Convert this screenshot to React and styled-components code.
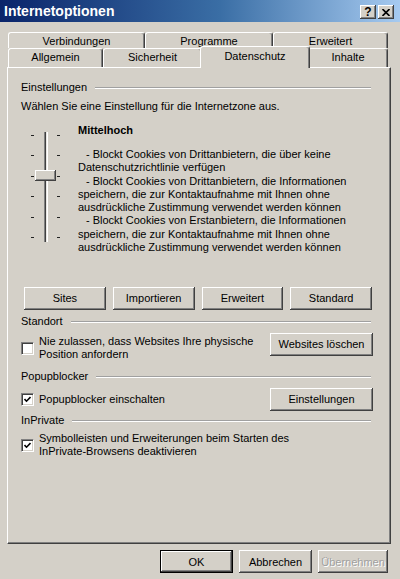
import React from "react"
import styled, { createGlobalStyle, css } from "styled-components"

const GlobalStyle = createGlobalStyle`
  html, body {
    margin: 0;
    padding: 0;
    background: #d4d0c8;
  }
  body {
    font-family: "Liberation Sans", Arial, sans-serif;
    font-size: 11px;
    color: #000;
  }
`

const raised = css`
  box-shadow: inset -1px -1px #404040, inset 1px 1px #ffffff,
    inset -2px -2px #808080, inset 2px 2px #d4d0c8;
`

const Window = styled.div`
  width: 400px;
  height: 579px;
  background: #d4d0c8;
  display: flex;
  flex-direction: column;
  overflow: hidden;
`

const TitleBar = styled.div`
  height: 22px;
  display: flex;
  align-items: center;
  justify-content: space-between;
  padding: 0 6px 0 4px;
  background: linear-gradient(to right, #0a246a 0%, #3a6ea5 55%, #a6caf0 100%);
`

const TitleText = styled.span`
  color: #fff;
  font-weight: bold;
  font-size: 14px;
`

const TitleButtons = styled.div`
  display: flex;
  gap: 2px;
  margin-top: 2px;
`

const TitleButton = styled.div`
  width: 16px;
  height: 14px;
  background: #d4d0c8;
  ${raised};
  display: flex;
  align-items: center;
  justify-content: center;
  font-weight: bold;
  font-size: 12px;
  line-height: 14px;
`

const TabArea = styled.div`
  padding: 10px 0 0 8px;
  position: relative;
  z-index: 1;
`

const TabRow = styled.div`
  display: flex;
  height: ${(p) => p.$height}px;
  align-items: flex-end;
  margin-bottom: ${(p) => (p.$front ? -1 : 0)}px;
`

const Tab = styled.div`
  box-sizing: border-box;
  width: ${(p) => p.$width}px;
  height: ${(p) => (p.$active ? 22 : p.$back ? 16 : 19)}px;
  margin: 0 ${(p) => (p.$active ? -2 : 0)}px ${(p) => (p.$active || p.$back ? 0 : 1)}px;
  padding-top: ${(p) => (p.$active ? 3 : 2)}px;
  background: #d4d0c8;
  border-top: 1px solid #fff;
  border-left: 1px solid #fff;
  border-right: 1px solid #404040;
  border-radius: 3px 3px 0 0;
  box-shadow: inset -1px 0 #808080;
  text-align: center;
  line-height: 13px;
  position: relative;
  z-index: ${(p) => (p.$active ? 2 : 1)};
`

const Panel = styled.div`
  box-sizing: border-box;
  width: 384px;
  height: 477px;
  margin-left: 7px;
  padding: 13px 17px 0 13px;
  border-top: 1px solid #fff;
  border-left: 1px solid #fff;
  border-right: 1px solid #404040;
  border-bottom: 1px solid #404040;
  box-shadow: inset -1px -1px #808080;
  display: flex;
  flex-direction: column;
  line-height: 13px;
`

const GroupHeader = styled.div`
  display: flex;
  align-items: center;
  gap: 8px;
  margin-top: ${(p) => p.$top || 0}px;
`

const Rule = styled.div`
  flex: 1;
  border-top: 1px solid #a0a0a0;
  border-bottom: 1px solid #fff;
  margin-right: 2px;
`

const Text = styled.div`
  margin-top: ${(p) => p.$top || 0}px;
`

const SettingsArea = styled.div`
  display: flex;
  margin-top: 11px;
`

const SliderBox = styled.div`
  position: relative;
  width: 29px;
  height: 110px;
  margin: 8px 0 0 10px;
  display: flex;
  justify-content: space-between;
`

const TickColumn = styled.div`
  width: 3px;
  display: flex;
  flex-direction: column;
  justify-content: space-between;
  padding: 3px 0 4px;
`

const Tick = styled.div`
  height: 1px;
  background: #222;
`

const Track = styled.div`
  box-sizing: border-box;
  width: 4px;
  border-left: 1px solid #808080;
  border-right: 1px solid #fff;
  box-shadow: inset 1px 0 #404040;
  background: #e8e6e2;
`

const Thumb = styled.div`
  position: absolute;
  left: 4px;
  top: 38px;
  width: 21px;
  height: 11px;
  background: #d4d0c8;
  ${raised};
`

const Description = styled.div`
  margin-left: 18px;
`

const Level = styled.div`
  font-weight: bold;
`

const DescLines = styled.div`
  margin-top: 11px;
  line-height: 13.3px;
`

const DescLine = styled.div`
  padding-left: ${(p) => (p.$dash ? 8 : 0)}px;
  white-space: nowrap;
`

const ButtonRow = styled.div`
  display: grid;
  grid-template-columns: repeat(4, 1fr);
  gap: 7px;
  margin: 33px 1px 0 3px;
`

const Button = styled.div`
  box-sizing: border-box;
  width: ${(p) => (p.$width ? `${p.$width}px` : "auto")};
  height: ${(p) => p.$height || 23}px;
  background: #d4d0c8;
  display: flex;
  align-items: center;
  justify-content: center;
  ${raised};
  ${(p) =>
    p.$default &&
    css`
      border: 1px solid #000;
    `}
  ${(p) =>
    p.$disabled &&
    css`
      color: #a0a0a0;
      text-shadow: 1px 1px #fff;
    `}
`

const OptionRow = styled.div`
  display: grid;
  grid-template-columns: ${(p) => (p.$single ? "1fr" : "1fr 103px")};
  align-items: ${(p) => p.$align || "center"};
  margin-top: ${(p) => p.$top || 0}px;
`

const CheckLabel = styled.label`
  display: flex;
  align-items: center;
  gap: 5px;
  padding-top: ${(p) => p.$pad || 0}px;
  white-space: nowrap;
`

const Box = styled.span`
  box-sizing: border-box;
  flex: none;
  width: 13px;
  height: 13px;
  background: #fff;
  border: 1px solid;
  border-color: #808080 #fff #fff #808080;
  box-shadow: inset 1px 1px #404040, inset -1px -1px #d4d0c8;
  display: flex;
  align-items: center;
  justify-content: center;
`

const Footer = styled.div`
  display: flex;
  justify-content: flex-end;
  gap: 6px;
  padding: 6px 12px 0 0;
`

function Checkbox({ checked }) {
  return (
    <Box>
      {checked && (
        <svg width="7" height="7" viewBox="0 0 7 7">
          <path d="M0.5 3 L2.5 5.2 L6.5 1" fill="none" stroke="#000" strokeWidth="1.6" />
        </svg>
      )}
    </Box>
  )
}

function Group({ label, top }) {
  return (
    <GroupHeader $top={top}>
      <span>{label}</span>
      <Rule />
    </GroupHeader>
  )
}

const ticks = [0, 1, 2, 3, 4, 5]

const lines = [
  { text: "- Blockt Cookies von Drittanbietern, die über keine", dash: true },
  { text: "Datenschutzrichtlinie verfügen" },
  { text: "- Blockt Cookies von Drittanbietern, die Informationen", dash: true },
  { text: "speichern, die zur Kontaktaufnahme mit Ihnen ohne" },
  { text: "ausdrückliche Zustimmung verwendet werden können" },
  { text: "- Blockt Cookies von Erstanbietern, die Informationen", dash: true },
  { text: "speichern, die zur Kontaktaufnahme mit Ihnen ohne" },
  { text: "ausdrückliche Zustimmung verwendet werden können" },
]

export default function App() {
  return (
    <Window>
      <GlobalStyle />
      <TitleBar>
        <TitleText>Internetoptionen</TitleText>
        <TitleButtons>
          <TitleButton>?</TitleButton>
          <TitleButton>
            <svg width="8" height="7" viewBox="0 0 8 7">
              <path d="M0.5 0 L7.5 7 M7.5 0 L0.5 7" stroke="#000" strokeWidth="1.6" />
            </svg>
          </TitleButton>
        </TitleButtons>
      </TitleBar>

      <TabArea>
        <TabRow $height={16}>
          <Tab $back $width={137}>Verbindungen</Tab>
          <Tab $back $width={128}>Programme</Tab>
          <Tab $back $width={115}>Erweitert</Tab>
        </TabRow>
        <TabRow $height={20} $front>
          <Tab $width={95}>Allgemein</Tab>
          <Tab $width={99}>Sicherheit</Tab>
          <Tab $width={110} $active>Datenschutz</Tab>
          <Tab $width={80}>Inhalte</Tab>
        </TabRow>
      </TabArea>

      <Panel>
        <Group label="Einstellungen" />
        <Text $top={6}>Wählen Sie eine Einstellung für die Internetzone aus.</Text>

        <SettingsArea>
          <SliderBox>
            <TickColumn>
              {ticks.map((t) => (
                <Tick key={t} />
              ))}
            </TickColumn>
            <Track />
            <TickColumn>
              {ticks.map((t) => (
                <Tick key={t} />
              ))}
            </TickColumn>
            <Thumb />
          </SliderBox>
          <Description>
            <Level>Mittelhoch</Level>
            <DescLines>
              {lines.map((l, i) => (
                <DescLine key={i} $dash={l.dash}>
                  {l.text}
                </DescLine>
              ))}
            </DescLines>
          </Description>
        </SettingsArea>

        <ButtonRow>
          <Button>Sites</Button>
          <Button>Importieren</Button>
          <Button>Erweitert</Button>
          <Button>Standard</Button>
        </ButtonRow>

        <Group label="Standort" top={5} />
        <OptionRow $top={5} $align="start">
          <CheckLabel $pad={2}>
            <Checkbox />
            <span>
              Nie zulassen, dass Websites Ihre physische
              <br />
              Position anfordern
            </span>
          </CheckLabel>
          <Button>Websites löschen</Button>
        </OptionRow>

        <Group label="Popupblocker" top={9} />
        <OptionRow $top={5}>
          <CheckLabel>
            <Checkbox checked />
            <span>Popupblocker einschalten</span>
          </CheckLabel>
          <Button>Einstellungen</Button>
        </OptionRow>

        <Group label="InPrivate" top={3} />
        <OptionRow $top={5} $single>
          <CheckLabel>
            <Checkbox checked />
            <span>
              Symbolleisten und Erweiterungen beim Starten des
              <br />
              InPrivate-Browsens deaktivieren
            </span>
          </CheckLabel>
        </OptionRow>
      </Panel>

      <Footer>
        <Button $width={73} $default>OK</Button>
        <Button $width={73}>Abbrechen</Button>
        <Button $width={70} $disabled>Übernehmen</Button>
      </Footer>
    </Window>
  )
}
